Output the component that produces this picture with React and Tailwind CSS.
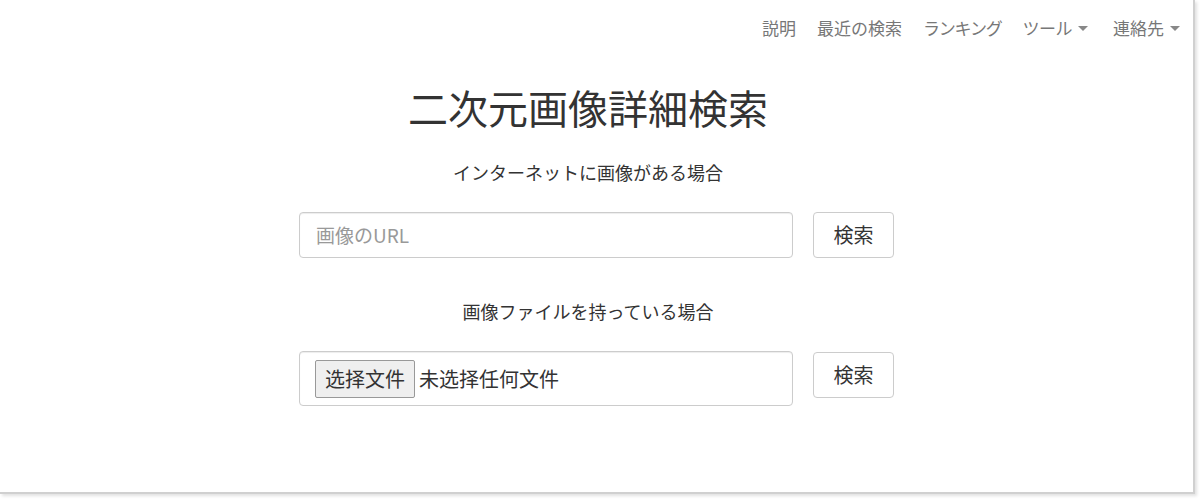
import React from "react";

const jp = { fontFamily: '"Noto Sans CJK JP", "Noto Sans", sans-serif' };
const sc = { fontFamily: '"Noto Sans CJK SC", "Noto Sans CJK JP", sans-serif' };

function Caret() {
  return (
    <span className="ml-[6px] inline-block h-0 w-0 border-x-[5px] border-t-[5px] border-x-transparent border-t-[#888] align-middle" />
  );
}

export default function App() {
  return (
    <div className="h-[500px] w-[1201px] overflow-hidden bg-white" style={jp}>
      <div className="h-[494px] w-[1195px] bg-white border-r-[2px] border-b-[2px] border-[#d0d0d0] shadow-[2px_2px_3px_rgba(0,0,0,0.12)]">
        <nav className="flex justify-end gap-[21px] pr-[13px] pt-[16px] text-[17px] leading-[24px] text-[#777]">
          <span>説明</span>
          <span>最近の検索</span>
          <span className="tracking-[-1.2px]">ランキング</span>
          <span className="mr-[4px] flex items-center tracking-[-0.5px]">ツール<Caret /></span>
          <span className="flex items-center">連絡先<Caret /></span>
        </nav>

        <div className="pr-[17px] text-center">
          <h1 className="mt-[43px] text-[40px] leading-[48px] text-[#333]">二次元画像詳細検索</h1>
          <p className="mt-[28px] text-[18px] leading-[26px] text-[#333]">インターネットに画像がある場合</p>
        </div>

        <div className="mt-[27px] flex justify-center gap-[20px]">
          <div className="flex h-[46px] w-[494px] items-center rounded-[4px] border border-[#ccc] pl-[16px] text-[19px] text-[#999] shadow-[inset_0_1px_1px_rgba(0,0,0,0.075)]">
            画像のURL
          </div>
          <button className="h-[46px] w-[81px] rounded-[4px] border border-[#ccc] bg-white text-[20px] text-[#333]">
            検索
          </button>
        </div>

        <div className="pr-[17px] text-center">
          <p className="mt-[40px] text-[18px] leading-[26px] text-[#333]">画像ファイルを持っている場合</p>
        </div>

        <div className="mt-[27px] flex justify-center gap-[20px]">
          <div className="flex h-[55px] w-[494px] items-center rounded-[4px] border border-[#ccc] pl-[15px] text-[20px] text-[#333] shadow-[inset_0_1px_1px_rgba(0,0,0,0.075)]" style={sc}>
            <span className="flex h-[38px] w-[100px] items-center justify-center rounded-[2px] border border-[#999] bg-[#efefef] text-[#333]">
              选择文件
            </span>
            <span className="ml-[4px]">未选择任何文件</span>
          </div>
          <button className="mt-[1px] h-[46px] w-[81px] rounded-[4px] border border-[#ccc] bg-white text-[20px] text-[#333]">
            検索
          </button>
        </div>
      </div>
    </div>
  );
}
